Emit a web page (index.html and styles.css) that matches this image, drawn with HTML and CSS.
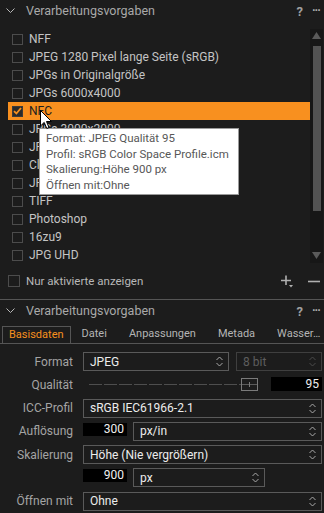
FILE: index.html
```html
<!DOCTYPE html>
<html lang="de">
<head>
<meta charset="utf-8">
<link rel="stylesheet" href="styles.css">
</head>
<body>
<div class="app">
  <section class="panel top">
    <header class="phead">
      <svg class="chev" width="9" height="6" viewBox="0 0 9 6"><path d="M0.5 0.5 L4.5 4.5 L8.5 0.5" fill="none" stroke="#b8b8b8" stroke-width="1"/></svg>
      <span class="ptitle">Verarbeitungsvorgaben</span>
      <span class="pq">?</span>
      <span class="pdots">···</span>
    </header>
    <div class="listwrap">
      <ul class="list">
        <li class="row"><span class="cb"></span><span>NFF</span></li>
        <li class="row"><span class="cb"></span><span>JPEG 1280 Pixel lange Seite (sRGB)</span></li>
        <li class="row"><span class="cb"></span><span>JPGs in Originalgröße</span></li>
        <li class="row"><span class="cb"></span><span>JPGs 6000x4000</span></li>
        <li class="row hl"><span class="cb on"><svg width="9" height="8" viewBox="0 0 9 8"><path d="M1 4.2 L3.4 6.5 L8 1" fill="none" stroke="#f7901e" stroke-width="1.8"/></svg></span><span>NFC</span></li>
        <li class="row"><span class="cb"></span><span>JPGs 3000x2000</span></li>
        <li class="row"><span class="cb"></span><span>JPGs 1920x1080</span></li>
        <li class="row"><span class="cb"></span><span>Cloud</span></li>
        <li class="row"><span class="cb"></span><span>JPG 4K</span></li>
        <li class="row"><span class="cb"></span><span>TIFF</span></li>
        <li class="row"><span class="cb"></span><span>Photoshop</span></li>
        <li class="row"><span class="cb"></span><span>16zu9</span></li>
        <li class="row"><span class="cb"></span><span>JPG UHD</span></li>
      </ul>
      <div class="sbar">
        <svg class="sarr" width="9" height="8" viewBox="0 0 9 8"><path d="M0 7 L4.5 0 L9 7 Z" fill="#5a5a5a"/></svg>
        <div class="sthumb"></div>
        <div class="sfill"></div>
        <svg class="sarr" width="9" height="8" viewBox="0 0 9 8"><path d="M0 0 L4.5 7 L9 0 Z" fill="#5a5a5a"/></svg>
      </div>
    </div>
    <div class="foot">
      <span class="cb big"></span>
      <span class="ftext">Nur aktivierte anzeigen</span>
      <svg class="plus" width="13" height="13" viewBox="0 0 13 13"><path d="M5 0.5 V10 M0 5.5 H10" stroke="#b0b0b0" stroke-width="1.6" fill="none"/><path d="M8 10 L12 10 L10 12.5 Z" fill="#b0b0b0"/></svg>
      <svg class="minus" width="12" height="3" viewBox="0 0 12 3"><path d="M0 1.5 H12" stroke="#b0b0b0" stroke-width="1.6"/></svg>
    </div>
  </section>
  <section class="panel bottom">
    <header class="phead">
      <svg class="chev" width="9" height="6" viewBox="0 0 9 6"><path d="M0.5 0.5 L4.5 4.5 L8.5 0.5" fill="none" stroke="#b8b8b8" stroke-width="1"/></svg>
      <span class="ptitle">Verarbeitungsvorgaben</span>
      <span class="pq">?</span>
      <span class="pdots">···</span>
    </header>
    <nav class="tabs">
      <span class="tab active">Basisdaten</span>
      <span class="tab">Datei</span>
      <span class="tab">Anpassungen</span>
      <span class="tab">Metada</span>
      <span class="tab last">Wasser…</span>
    </nav>
    <div class="form">
      <div class="frow">
        <label class="lbl">Format</label>
        <div class="sel w146"><span>JPEG</span><svg class="ud" width="7" height="11" viewBox="0 0 7 11"><path d="M0.5 4 L3.5 1 L6.5 4 M0.5 7 L3.5 10 L6.5 7" fill="none" stroke="#a8a8a8" stroke-width="1"/></svg></div>
        <div class="sel dis w86"><span>8 bit</span><svg class="ud" width="7" height="11" viewBox="0 0 7 11"><path d="M0.5 4 L3.5 1 L6.5 4 M0.5 7 L3.5 10 L6.5 7" fill="none" stroke="#4a4a4a" stroke-width="1"/></svg></div>
      </div>
      <div class="frow">
        <label class="lbl">Qualität</label>
        <div class="slider"><div class="track"></div><div class="knob"></div></div>
        <div class="num wq">95</div>
      </div>
      <div class="frow">
        <label class="lbl">ICC-Profil</label>
        <div class="sel grow"><span>sRGB IEC61966-2.1</span><svg class="ud" width="7" height="11" viewBox="0 0 7 11"><path d="M0.5 4 L3.5 1 L6.5 4 M0.5 7 L3.5 10 L6.5 7" fill="none" stroke="#a8a8a8" stroke-width="1"/></svg></div>
      </div>
      <div class="frow">
        <label class="lbl">Auflösung</label>
        <div class="num wn">300</div>
        <div class="sel grow"><span>px/in</span><svg class="ud" width="7" height="11" viewBox="0 0 7 11"><path d="M0.5 4 L3.5 1 L6.5 4 M0.5 7 L3.5 10 L6.5 7" fill="none" stroke="#a8a8a8" stroke-width="1"/></svg></div>
      </div>
      <div class="frow">
        <label class="lbl">Skalierung</label>
        <div class="sel grow"><span>Höhe (Nie vergrößern)</span><svg class="ud" width="7" height="11" viewBox="0 0 7 11"><path d="M0.5 4 L3.5 1 L6.5 4 M0.5 7 L3.5 10 L6.5 7" fill="none" stroke="#a8a8a8" stroke-width="1"/></svg></div>
      </div>
      <div class="frow">
        <label class="lbl"></label>
        <div class="num wn">900</div>
        <div class="sel w132"><span>px</span><svg class="ud" width="7" height="11" viewBox="0 0 7 11"><path d="M0.5 4 L3.5 1 L6.5 4 M0.5 7 L3.5 10 L6.5 7" fill="none" stroke="#a8a8a8" stroke-width="1"/></svg></div>
      </div>
      <div class="frow">
        <label class="lbl">Öffnen mit</label>
        <div class="sel grow"><span>Ohne</span><svg class="ud" width="7" height="11" viewBox="0 0 7 11"><path d="M0.5 4 L3.5 1 L6.5 4 M0.5 7 L3.5 10 L6.5 7" fill="none" stroke="#a8a8a8" stroke-width="1"/></svg></div>
      </div>
    </div>
  </section>
  <div class="tooltip">
    <div>Format: JPEG Qualität 95</div>
    <div>Profil: sRGB Color Space Profile.icm</div>
    <div>Skalierung:Höhe 900 px</div>
    <div>Öffnen mit:Ohne</div>
  </div>
  <svg class="cursor" width="13" height="20" viewBox="0 0 13 20"><path d="M0.5 0.5 L0.5 16 L4.2 12.4 L6.8 18.5 L9 17.5 L6.5 11.5 L11.5 11.5 Z" fill="#fff" stroke="#000" stroke-width="1"/></svg>
</div>
</body>
</html>
```
FILE: styles.css
```css
* { box-sizing: border-box; }
html, body { margin: 0; padding: 0; }
body {
  background: #1c1c1c;
  font-family: Roboto, "Noto Sans", sans-serif;
  font-size: 12px;
  color: #c4c4c4;
}
.app { position: relative; width: 324px; height: 513px; overflow: hidden; }
.panel.top { height: 299px; display: flex; flex-direction: column; }
.panel.bottom { border-top: 1px solid #555; }
.phead {
  height: 22px;
  display: flex;
  align-items: center;
  padding-left: 6px;
}
.chev { margin-top: -1px; }
.ptitle {
  margin-left: 11px;
  font-size: 12.5px;
  color: #a9a9a9;
  flex: 1;
  line-height: 22px;
}
.pq { color: #a0a0a0; font-weight: bold; font-size: 13px; margin-right: 9px; }
.pdots { color: #b0b0b0; font-weight: bold; font-size: 12px; letter-spacing: -1px; width: 12px; }
.listwrap {
  margin-top: 7px;
  height: 234px;
  display: flex;
}
.list {
  list-style: none;
  margin: 1px 0 0 8px;
  padding: 0;
  width: 302px;
}
.row {
  height: 18px;
  display: flex;
  align-items: center;
  padding-left: 4px;
  gap: 6px;
  white-space: nowrap;
}
.row.hl { background: #f8901f; color: #1e1e1e; }
.cb {
  width: 11px; height: 11px;
  border: 1px solid #4c4c4c;
  flex: none;
  display: flex; align-items: center; justify-content: center;
}
.cb.on { background: #2a2a2a; border-color: #3a3a3a; }
.cb.big { width: 12px; height: 12px; }
.sbar {
  width: 13px;
  background: #171717;
  display: flex;
  flex-direction: column;
  align-items: center;
  padding: 3px 0 3px;
}
.sarr { flex: none; }
.sthumb { width: 8px; height: 165px; background: #535353; margin-top: 6px; }
.sfill { flex: 1; }
.foot {
  flex: 1;
  display: flex;
  align-items: center;
  padding: 0 4px 0 8px;
}
.ftext { margin-left: 6px; flex: 1; color: #b8b8b8; font-size: 11.5px; }
.plus { margin-right: 14px; margin-top: 1px; }
.tabs {
  margin-top: 4px;
  height: 18px;
  display: flex;
  padding-left: 2px;
  border-bottom: 1px solid #555;
  white-space: nowrap;
  overflow: hidden;
  font-size: 11px;
}
.tab {
  padding: 0 11px;
  line-height: 16px;
  color: #b4b4b4;
  flex: none;
}
.tab.active {
  color: #f7901e;
  border: 1px solid #555;
  border-bottom: 1px solid #1c1c1c;
  padding: 0 6px 0 6px;
  height: 18px;
  background: #1c1c1c;
}
.tab.last { flex: 1 1 auto; overflow: hidden; padding-right: 0; }
.form {
  padding: 8px 2px 0 0;
  display: flex;
  flex-direction: column;
  gap: 4.3px;
}
.frow {
  height: 19px;
  display: flex;
  align-items: center;
}
.lbl {
  width: 73px;
  text-align: right;
  color: #a4a4a4;
  margin-right: 10px;
  flex: none;
}
.sel {
  height: 19px;
  border: 1px solid #5a5a5a;
  display: flex;
  align-items: center;
  justify-content: space-between;
  padding: 0 5px 0 6px;
  color: #ececec;
}
.sel.dis { color: #5e5e5e; border-color: #3f3f3f; margin-left: 7px; }
.w146 { width: 146px; }
.w86 { width: 86px; }
.w132 { width: 132px; }
.grow { flex: 1; }
.num {
  background: #000;
  color: #f0f0f0;
  text-align: right;
  flex: none;
  align-self: flex-start;
  margin-top: 1px;
  line-height: 13px;
  height: 13px;
  padding-right: 3px;
}
.num.wq { width: 51px; height: 14px; line-height: 14px; margin-left: 13px; margin-top: 2px; }
.num.wn { width: 44px; margin-right: 6px; }
.slider {
  width: 175px;
  height: 19px;
  display: flex;
  align-items: center;
  padding-left: 6px;
}
.track {
  width: 153px;
  height: 1px;
  background: repeating-linear-gradient(90deg, #4e4e4e 0 13px, transparent 13px 15px);
}
.knob {
  width: 17px; height: 13px;
  border: 1px solid #7a7a7a;
  background: linear-gradient(#7a7a7a, #7a7a7a) center / 1px 5px no-repeat,
              linear-gradient(#5a5a5a, #5a5a5a) center / 100% 1px no-repeat;
}
.tooltip {
  position: absolute;
  left: 39px; top: 128px;
  width: 200px; height: 67px;
  background: #fff;
  border: 1px solid #9a9a9a;
  color: #575757;
  padding: 2px 0 0 6px;
  line-height: 15.5px;
  font-size: 11.5px;
  white-space: nowrap;
}
.cursor { position: absolute; left: 40px; top: 110px; }
```
